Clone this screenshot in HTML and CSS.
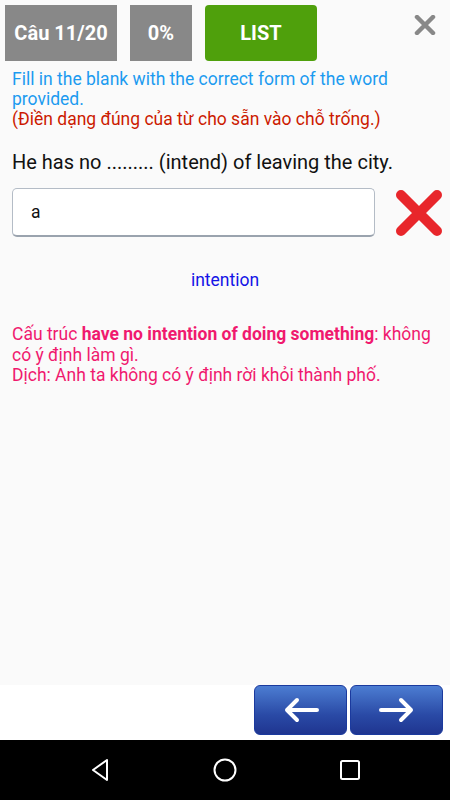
FILE: index.html
```html
<!DOCTYPE html>
<html lang="vi">
<head>
    <meta charset="UTF-8">
    <meta name="viewport" content="width=device-width, initial-scale=1.0">
    <title>Câu 11/20</title>
    <link rel="stylesheet" href="styles.css">
</head>
<body>
    <div class="screen">
        <div class="content">
            <div class="top-bar">
                <div class="box box-counter">Câu 11/20</div>
                <div class="box box-score">0%</div>
                <div class="box box-list">LIST</div>
                <div class="close">
                    <svg width="22" height="20" viewBox="0 0 22 20">
                        <path d="M3 2 L19 18 M19 2 L3 18" stroke="#888" stroke-width="4.5" stroke-linecap="round"/>
                    </svg>
                </div>
            </div>

            <p class="instruction">Fill in the blank with the correct form of the word provided.</p>
            <p class="instruction-vi">(Điền dạng đúng của từ cho sẵn vào chỗ trống.)</p>

            <p class="question">He has no ......... (intend) of leaving the city.</p>

            <div class="answer-row">
                <div class="answer-input">a</div>
                <div class="wrong-mark">
                    <svg width="48" height="46" viewBox="0 0 48 46">
                        <path d="M6 5 L42 41 M42 5 L6 41" stroke="#e8262b" stroke-width="10" stroke-linecap="round"/>
                    </svg>
                </div>
            </div>

            <p class="correct">intention</p>

            <div class="explain">
                <p>Cấu trúc <strong>have no intention of doing something</strong>: không có ý định làm gì.</p>
                <p>Dịch: Anh ta không có ý định rời khỏi thành phố.</p>
            </div>
        </div>

        <div class="bottom-bar">
            <div class="nav-btn">
                <svg width="40" height="30" viewBox="0 0 40 30">
                    <path d="M36 15 H6 M16 5 L6 15 L16 25" stroke="#fff" stroke-width="4" fill="none" stroke-linecap="round" stroke-linejoin="round"/>
                </svg>
            </div>
            <div class="nav-btn">
                <svg width="40" height="30" viewBox="0 0 40 30">
                    <path d="M4 15 H34 M24 5 L34 15 L24 25" stroke="#fff" stroke-width="4" fill="none" stroke-linecap="round" stroke-linejoin="round"/>
                </svg>
            </div>
        </div>

        <div class="system-bar">
            <svg width="24" height="26" viewBox="0 0 24 26">
                <path d="M19 3 L5 13 L19 23 Z" stroke="#fff" stroke-width="2" fill="none" stroke-linejoin="round"/>
            </svg>
            <svg width="26" height="26" viewBox="0 0 26 26">
                <circle cx="13" cy="13" r="10.5" stroke="#fff" stroke-width="2" fill="none"/>
            </svg>
            <svg width="24" height="24" viewBox="0 0 24 24">
                <rect x="3" y="3" width="18" height="18" rx="1.5" stroke="#fff" stroke-width="2" fill="none"/>
            </svg>
        </div>
    </div>
</body>
</html>
```

FILE: styles.css
```css
body {
    margin: 0;
    font-family: Roboto, "Noto Sans", Arial, sans-serif;
    background-color: #fafafa;
}

.screen {
    width: 450px;
    height: 800px;
    display: flex;
    flex-direction: column;
}

.content {
    flex: 1;
    padding: 5px 0 0 0;
}

.top-bar {
    display: flex;
    align-items: flex-start;
    padding-left: 5px;
}

.box {
    height: 56px;
    display: flex;
    align-items: center;
    justify-content: center;
    color: white;
    font-weight: bold;
    font-size: 20px;
    background-color: #888888;
    margin-right: 13px;
}

.box-counter {
    width: 112px;
}

.box-score {
    width: 62px;
}

.box-list {
    width: 112px;
    background-color: #4fa00c;
    border-radius: 4px;
}

.close {
    margin-left: auto;
    margin-right: 14px;
    margin-top: 10px;
}

.instruction, .instruction-vi {
    margin: 0;
    padding: 0 12px;
    font-size: 17.5px;
    line-height: 20px;
}

.instruction {
    margin-top: 8px;
    color: #1c9bf0;
}

.instruction-vi {
    color: #cc1a00;
}

.question {
    margin: 21px 0 0 0;
    padding: 0 12px;
    font-size: 20px;
    line-height: 24px;
    color: #111;
}

.answer-row {
    display: flex;
    align-items: center;
    margin-top: 14px;
    padding-left: 12px;
}

.answer-input {
    width: 343px;
    height: 46px;
    background-color: white;
    border: 1px solid #b4bcc6;
    border-bottom: 2px solid #9aa3ae;
    border-radius: 5px;
    padding-left: 18px;
    display: flex;
    align-items: center;
    font-size: 17.5px;
    color: #111;
}

.wrong-mark {
    margin-left: 20px;
    display: flex;
}

.correct {
    margin: 33px 0 0 0;
    text-align: center;
    font-size: 17.5px;
    line-height: 20px;
    color: #1414e6;
}

.explain {
    margin-top: 34px;
    padding: 0 12px;
    font-size: 17.5px;
    line-height: 20.5px;
    color: #f0196e;
}

.explain p {
    margin: 0;
}

.bottom-bar {
    height: 55px;
    background-color: white;
    display: flex;
    justify-content: flex-end;
    gap: 3px;
    padding-right: 7px;
}

.nav-btn {
    width: 91px;
    height: 48px;
    border: 1px solid #1b3a9e;
    border-radius: 6px;
    background: linear-gradient(#4c7dd2, #2a4aa6 60%, #1f3590);
    display: flex;
    align-items: center;
    justify-content: center;
}

.system-bar {
    height: 60px;
    background-color: black;
    display: flex;
    align-items: center;
    justify-content: space-between;
    padding: 0 88px 0 88px;
}
```
